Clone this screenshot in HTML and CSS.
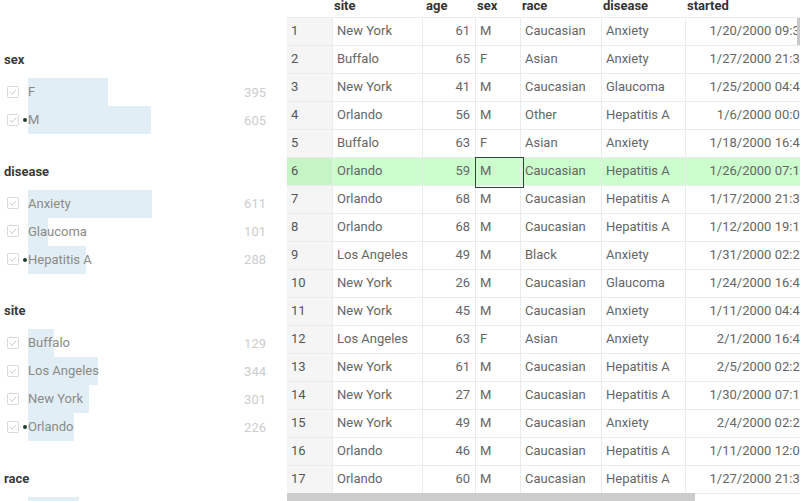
FILE: index.html
```html
<!DOCTYPE html>
<html>
<head>
<meta charset="utf-8">
<link rel="stylesheet" href="styles.css">
</head>
<body>
<div class="app">
  <aside class="filters">
    <section class="facet">
      <h3 class="facet-title">sex</h3>
      <ul class="facet-list">
        <li class="facet-item"><span class="check"><svg width="12" height="12" viewBox="0 0 12 12"><rect x="0.5" y="0.5" width="11" height="11" rx="1" fill="#fff" stroke="#d9d9d9"/><path d="M3 6.2 L5.1 8.3 L9.2 3.8" fill="none" stroke="#cbcbcb" stroke-width="1"/></svg></span><span class="mark"></span><span class="label" style="background-size:80px 100%">F</span><span class="count">395</span></li>
        <li class="facet-item"><span class="check"><svg width="12" height="12" viewBox="0 0 12 12"><rect x="0.5" y="0.5" width="11" height="11" rx="1" fill="#fff" stroke="#d9d9d9"/><path d="M3 6.2 L5.1 8.3 L9.2 3.8" fill="none" stroke="#cbcbcb" stroke-width="1"/></svg></span><span class="mark"><i class="dot"></i></span><span class="label" style="background-size:123px 100%">M</span><span class="count">605</span></li>
      </ul>
    </section>
    <section class="facet">
      <h3 class="facet-title">disease</h3>
      <ul class="facet-list">
        <li class="facet-item"><span class="check"><svg width="12" height="12" viewBox="0 0 12 12"><rect x="0.5" y="0.5" width="11" height="11" rx="1" fill="#fff" stroke="#d9d9d9"/><path d="M3 6.2 L5.1 8.3 L9.2 3.8" fill="none" stroke="#cbcbcb" stroke-width="1"/></svg></span><span class="mark"></span><span class="label" style="background-size:124px 100%">Anxiety</span><span class="count">611</span></li>
        <li class="facet-item"><span class="check"><svg width="12" height="12" viewBox="0 0 12 12"><rect x="0.5" y="0.5" width="11" height="11" rx="1" fill="#fff" stroke="#d9d9d9"/><path d="M3 6.2 L5.1 8.3 L9.2 3.8" fill="none" stroke="#cbcbcb" stroke-width="1"/></svg></span><span class="mark"></span><span class="label" style="background-size:20px 100%">Glaucoma</span><span class="count">101</span></li>
        <li class="facet-item"><span class="check"><svg width="12" height="12" viewBox="0 0 12 12"><rect x="0.5" y="0.5" width="11" height="11" rx="1" fill="#fff" stroke="#d9d9d9"/><path d="M3 6.2 L5.1 8.3 L9.2 3.8" fill="none" stroke="#cbcbcb" stroke-width="1"/></svg></span><span class="mark"><i class="dot"></i></span><span class="label" style="background-size:58px 100%">Hepatitis A</span><span class="count">288</span></li>
      </ul>
    </section>
    <section class="facet">
      <h3 class="facet-title">site</h3>
      <ul class="facet-list">
        <li class="facet-item"><span class="check"><svg width="12" height="12" viewBox="0 0 12 12"><rect x="0.5" y="0.5" width="11" height="11" rx="1" fill="#fff" stroke="#d9d9d9"/><path d="M3 6.2 L5.1 8.3 L9.2 3.8" fill="none" stroke="#cbcbcb" stroke-width="1"/></svg></span><span class="mark"></span><span class="label" style="background-size:26px 100%">Buffalo</span><span class="count">129</span></li>
        <li class="facet-item"><span class="check"><svg width="12" height="12" viewBox="0 0 12 12"><rect x="0.5" y="0.5" width="11" height="11" rx="1" fill="#fff" stroke="#d9d9d9"/><path d="M3 6.2 L5.1 8.3 L9.2 3.8" fill="none" stroke="#cbcbcb" stroke-width="1"/></svg></span><span class="mark"></span><span class="label" style="background-size:70px 100%">Los Angeles</span><span class="count">344</span></li>
        <li class="facet-item"><span class="check"><svg width="12" height="12" viewBox="0 0 12 12"><rect x="0.5" y="0.5" width="11" height="11" rx="1" fill="#fff" stroke="#d9d9d9"/><path d="M3 6.2 L5.1 8.3 L9.2 3.8" fill="none" stroke="#cbcbcb" stroke-width="1"/></svg></span><span class="mark"></span><span class="label" style="background-size:61px 100%">New York</span><span class="count">301</span></li>
        <li class="facet-item"><span class="check"><svg width="12" height="12" viewBox="0 0 12 12"><rect x="0.5" y="0.5" width="11" height="11" rx="1" fill="#fff" stroke="#d9d9d9"/><path d="M3 6.2 L5.1 8.3 L9.2 3.8" fill="none" stroke="#cbcbcb" stroke-width="1"/></svg></span><span class="mark"><i class="dot"></i></span><span class="label" style="background-size:46px 100%">Orlando</span><span class="count">226</span></li>
      </ul>
    </section>
    <section class="facet">
      <h3 class="facet-title">race</h3>
      <ul class="facet-list">
        <li class="facet-item"><span class="check"><svg width="12" height="12" viewBox="0 0 12 12"><rect x="0.5" y="0.5" width="11" height="11" rx="1" fill="#fff" stroke="#d9d9d9"/><path d="M3 6.2 L5.1 8.3 L9.2 3.8" fill="none" stroke="#cbcbcb" stroke-width="1"/></svg></span><span class="mark"></span><span class="label" style="background-size:51px 100%">Asian</span><span class="count">251</span></li>
      </ul>
    </section>
  </aside>

  <main class="grid">
    <div class="row head">
      <div class="cell c-num"></div>
      <div class="cell c-site">site</div>
      <div class="cell c-age">age</div>
      <div class="cell c-sex">sex</div>
      <div class="cell c-race">race</div>
      <div class="cell c-dis">disease</div>
      <div class="cell c-start">started</div>
    </div>
    <div class="row"><div class="cell c-num">1</div><div class="cell c-site">New York</div><div class="cell c-age">61</div><div class="cell c-sex">M</div><div class="cell c-race">Caucasian</div><div class="cell c-dis">Anxiety</div><div class="cell c-start">1/20/2000 09:36</div></div>
    <div class="row"><div class="cell c-num">2</div><div class="cell c-site">Buffalo</div><div class="cell c-age">65</div><div class="cell c-sex">F</div><div class="cell c-race">Asian</div><div class="cell c-dis">Anxiety</div><div class="cell c-start">1/27/2000 21:36</div></div>
    <div class="row"><div class="cell c-num">3</div><div class="cell c-site">New York</div><div class="cell c-age">41</div><div class="cell c-sex">M</div><div class="cell c-race">Caucasian</div><div class="cell c-dis">Glaucoma</div><div class="cell c-start">1/25/2000 04:48</div></div>
    <div class="row"><div class="cell c-num">4</div><div class="cell c-site">Orlando</div><div class="cell c-age">56</div><div class="cell c-sex">M</div><div class="cell c-race">Other</div><div class="cell c-dis">Hepatitis A</div><div class="cell c-start">1/6/2000 00:00</div></div>
    <div class="row"><div class="cell c-num">5</div><div class="cell c-site">Buffalo</div><div class="cell c-age">63</div><div class="cell c-sex">F</div><div class="cell c-race">Asian</div><div class="cell c-dis">Anxiety</div><div class="cell c-start">1/18/2000 16:48</div></div>
    <div class="row selected"><div class="cell c-num">6</div><div class="cell c-site">Orlando</div><div class="cell c-age">59</div><div class="cell c-sex active">M</div><div class="cell c-race">Caucasian</div><div class="cell c-dis">Hepatitis A</div><div class="cell c-start">1/26/2000 07:12</div></div>
    <div class="row"><div class="cell c-num">7</div><div class="cell c-site">Orlando</div><div class="cell c-age">68</div><div class="cell c-sex">M</div><div class="cell c-race">Caucasian</div><div class="cell c-dis">Hepatitis A</div><div class="cell c-start">1/17/2000 21:36</div></div>
    <div class="row"><div class="cell c-num">8</div><div class="cell c-site">Orlando</div><div class="cell c-age">68</div><div class="cell c-sex">M</div><div class="cell c-race">Caucasian</div><div class="cell c-dis">Hepatitis A</div><div class="cell c-start">1/12/2000 19:12</div></div>
    <div class="row"><div class="cell c-num">9</div><div class="cell c-site">Los Angeles</div><div class="cell c-age">49</div><div class="cell c-sex">M</div><div class="cell c-race">Black</div><div class="cell c-dis">Anxiety</div><div class="cell c-start">1/31/2000 02:24</div></div>
    <div class="row"><div class="cell c-num">10</div><div class="cell c-site">New York</div><div class="cell c-age">26</div><div class="cell c-sex">M</div><div class="cell c-race">Caucasian</div><div class="cell c-dis">Glaucoma</div><div class="cell c-start">1/24/2000 16:48</div></div>
    <div class="row"><div class="cell c-num">11</div><div class="cell c-site">New York</div><div class="cell c-age">45</div><div class="cell c-sex">M</div><div class="cell c-race">Caucasian</div><div class="cell c-dis">Anxiety</div><div class="cell c-start">1/11/2000 04:48</div></div>
    <div class="row"><div class="cell c-num">12</div><div class="cell c-site">Los Angeles</div><div class="cell c-age">63</div><div class="cell c-sex">F</div><div class="cell c-race">Asian</div><div class="cell c-dis">Anxiety</div><div class="cell c-start">2/1/2000 16:48</div></div>
    <div class="row"><div class="cell c-num">13</div><div class="cell c-site">New York</div><div class="cell c-age">61</div><div class="cell c-sex">M</div><div class="cell c-race">Caucasian</div><div class="cell c-dis">Hepatitis A</div><div class="cell c-start">2/5/2000 02:24</div></div>
    <div class="row"><div class="cell c-num">14</div><div class="cell c-site">New York</div><div class="cell c-age">27</div><div class="cell c-sex">M</div><div class="cell c-race">Caucasian</div><div class="cell c-dis">Hepatitis A</div><div class="cell c-start">1/30/2000 07:12</div></div>
    <div class="row"><div class="cell c-num">15</div><div class="cell c-site">New York</div><div class="cell c-age">49</div><div class="cell c-sex">M</div><div class="cell c-race">Caucasian</div><div class="cell c-dis">Anxiety</div><div class="cell c-start">2/4/2000 02:24</div></div>
    <div class="row"><div class="cell c-num">16</div><div class="cell c-site">Orlando</div><div class="cell c-age">46</div><div class="cell c-sex">M</div><div class="cell c-race">Caucasian</div><div class="cell c-dis">Hepatitis A</div><div class="cell c-start">1/11/2000 12:00</div></div>
    <div class="row"><div class="cell c-num">17</div><div class="cell c-site">Orlando</div><div class="cell c-age">60</div><div class="cell c-sex">M</div><div class="cell c-race">Caucasian</div><div class="cell c-dis">Hepatitis A</div><div class="cell c-start">1/27/2000 21:36</div></div>
    <div class="vthumb"></div>
    <div class="hthumb"></div>
  </main>
</div>
</body>
</html>
```
FILE: styles.css
```css
* { box-sizing: border-box; }
html, body {
  margin: 0;
  padding: 0;
  background: #fff;
  overflow: hidden;
}
body {
  font-family: Roboto, "Liberation Sans", sans-serif;
  font-size: 13px;
  color: #666;
}
.app {
  display: flex;
  width: 800px;
  height: 501px;
  overflow: hidden;
}

/* filter panel */
.filters {
  width: 287px;
  flex: none;
  padding: 49px 21px 0 0;
}
.facet-title {
  margin: 0 0 9px 4px;
  height: 20px;
  line-height: 21px;
  font-size: 13px;
  font-weight: bold;
  color: #3a3a3a;
}
.facet-list {
  list-style: none;
  margin: 0 0 26.5px 0;
  padding: 0;
}
.facet-item {
  display: flex;
  align-items: center;
  height: 28px;
  padding-left: 7px;
}
.check {
  width: 12px;
  height: 12px;
  flex: none;
  display: flex;
  margin-top: -1px;
}
.mark {
  width: 9px;
  flex: none;
  display: flex;
  justify-content: flex-end;
  padding-right: 1px;
}
.dot {
  width: 4px;
  height: 4px;
  border-radius: 50%;
  background: #1f3d2a;
}
.label {
  flex: 1;
  height: 28px;
  line-height: 28px;
  color: #8a8a8a;
  white-space: nowrap;
  background-image: linear-gradient(#e1eef5, #e1eef5);
  background-repeat: no-repeat;
  background-position: 0 0;
}
.count {
  color: #cdcdcd;
  text-align: right;
}

/* data grid */
.grid {
  flex: 1;
  position: relative;
  overflow: hidden;
}
.row {
  display: flex;
  height: 28px;
  width: max-content;
}
.row.head {
  height: 18px;
}
.cell {
  flex: none;
  height: 28px;
  line-height: 26px;
  padding: 0 4px;
  border-right: 1px solid #ebebeb;
  border-bottom: 1px solid #ebebeb;
  white-space: nowrap;
  overflow: hidden;
}
.head .cell {
  height: 18px;
  line-height: 12px;
  padding: 0 1px;
  border-right-color: transparent;
  font-weight: bold;
  color: #333;
  overflow: visible;
}
.c-num { width: 46px; background: #f5f5f5; color: #555; padding-left: 4px; }
.head .c-num { background: #fff; }
.c-site { width: 90px; }
.c-age { width: 53px; text-align: right; padding-right: 5px; }
.head .c-age { text-align: left; padding-left: 3px; }
.c-sex { width: 45px; }
.c-race { width: 81px; }
.c-dis { width: 84px; }
.c-start { width: 127px; text-align: right; padding-right: 5px; overflow: visible; }
.head .c-start { text-align: left; }

.row.selected .cell { background: #ccfdcc; }
.row.selected .c-num { background: #c5f5c5; }
.cell.active {
  position: relative;
  overflow: visible;
}
.cell.active::after {
  content: "";
  position: absolute;
  left: -1px;
  top: -1px;
  width: 47px;
  height: 29px;
  border: 1px solid #2b4636;
}

.vthumb {
  position: absolute;
  right: 0;
  top: 18px;
  width: 3px;
  height: 27px;
  background: #c8c8c8;
}
.hthumb {
  position: absolute;
  left: 0;
  bottom: 0;
  width: 408px;
  height: 8px;
  background: #cdcdcd;
}
```
